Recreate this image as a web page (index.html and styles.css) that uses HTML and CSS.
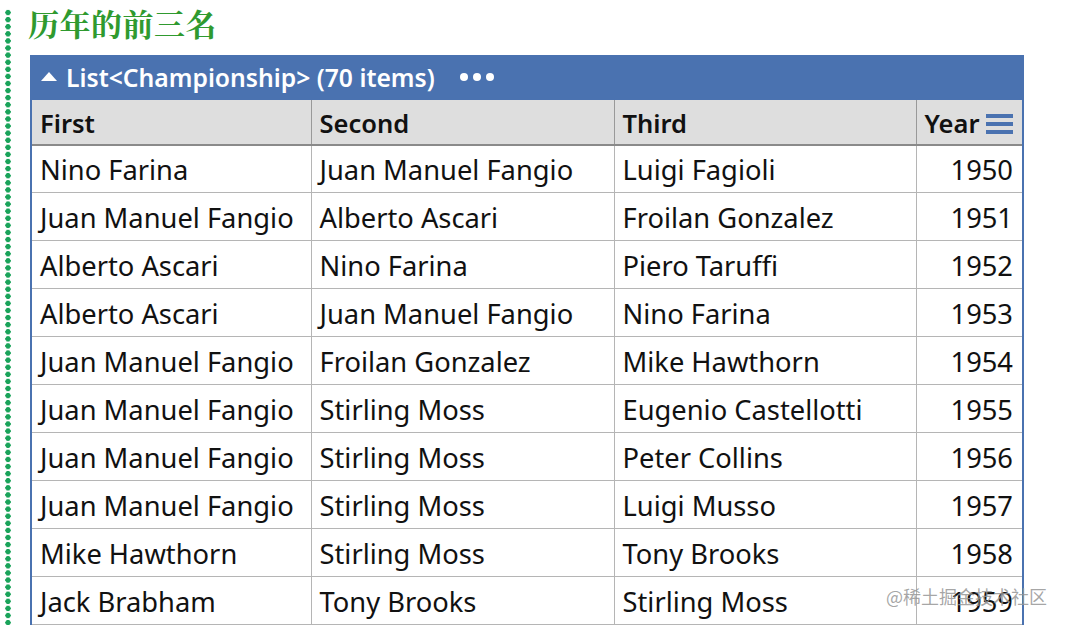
FILE: index.html
```html
<!DOCTYPE html>
<html>
<head>
<meta charset="utf-8">
<link rel="stylesheet" href="styles.css">
</head>
<body>
<div class="page">
  <div class="rail"></div>
  <div class="content">
    <h1 class="title">历年的前三名</h1>
    <div class="grid">
      <div class="bar">
        <span class="tri"></span>
        <span class="bar-text">List&lt;Championship&gt; (70 items)</span>
        <span class="dots"><i></i><i></i><i></i></span>
      </div>
      <table class="tbl">
        <colgroup>
          <col class="c1"><col class="c2"><col class="c3"><col class="c4">
        </colgroup>
        <thead>
          <tr><th>First</th><th>Second</th><th>Third</th><th class="yr">Year <span class="menu"><i></i><i></i><i></i></span></th></tr>
        </thead>
        <tbody>
          <tr><td>Nino Farina</td><td>Juan Manuel Fangio</td><td>Luigi Fagioli</td><td class="num">1950</td></tr>
          <tr><td>Juan Manuel Fangio</td><td>Alberto Ascari</td><td>Froilan Gonzalez</td><td class="num">1951</td></tr>
          <tr><td>Alberto Ascari</td><td>Nino Farina</td><td>Piero Taruffi</td><td class="num">1952</td></tr>
          <tr><td>Alberto Ascari</td><td>Juan Manuel Fangio</td><td>Nino Farina</td><td class="num">1953</td></tr>
          <tr><td>Juan Manuel Fangio</td><td>Froilan Gonzalez</td><td>Mike Hawthorn</td><td class="num">1954</td></tr>
          <tr><td>Juan Manuel Fangio</td><td>Stirling Moss</td><td>Eugenio Castellotti</td><td class="num">1955</td></tr>
          <tr><td>Juan Manuel Fangio</td><td>Stirling Moss</td><td>Peter Collins</td><td class="num">1956</td></tr>
          <tr><td>Juan Manuel Fangio</td><td>Stirling Moss</td><td>Luigi Musso</td><td class="num">1957</td></tr>
          <tr><td>Mike Hawthorn</td><td>Stirling Moss</td><td>Tony Brooks</td><td class="num">1958</td></tr>
          <tr><td>Jack Brabham</td><td>Tony Brooks</td><td>Stirling Moss</td><td class="num">1959</td></tr>
        </tbody>
      </table>
    </div>
  </div>
  <div class="watermark">@稀土掘金技术社区</div>
</div>
</body>
</html>
```

FILE: styles.css
```css
html, body {
  margin: 0;
  padding: 0;
  background: #ffffff;
  overflow: hidden;
}
.page {
  position: relative;
  width: 1066px;
  height: 625px;
  display: flex;
  overflow: hidden;
}
.rail {
  width: 6px;
  margin-left: 5px;
  margin-top: 9px;
  height: 620px;
  background-image: radial-gradient(circle, #1aa35a 2.5px, transparent 2.9px);
  background-size: 6px 7.1px;
  background-repeat: repeat-y;
}
.content {
  margin-left: 19px;
  display: flex;
  flex-direction: column;
}
.title {
  margin: 3px 0 0 -2px;
  height: 55px;
  font-family: "Noto Serif CJK SC", "Noto Sans CJK SC", serif;
  font-weight: bold;
  font-size: 31px;
  line-height: 40px;
  color: #2f9a2f;
  letter-spacing: 0.5px;
}
.grid {
  width: 994px;
  border-left: 2px solid #4a72b0;
  border-right: 2px solid #4a72b0;
  box-sizing: border-box;
}
.bar {
  height: 45px;
  background: #4a72b0;
  color: #ffffff;
  display: flex;
  align-items: center;
  font-family: "Noto Sans", "Open Sans", sans-serif;
  font-weight: 600;
  font-size: 24.7px;
  padding-left: 9px;
  box-sizing: border-box;
}
.tri {
  width: 0;
  height: 0;
  border-left: 8px solid transparent;
  border-right: 8px solid transparent;
  border-bottom: 9px solid #ffffff;
  margin-right: 9px;
  margin-top: -2px;
}
.dots {
  display: flex;
  gap: 5px;
  margin-left: 25px;
}
.dots i {
  width: 8px;
  height: 8px;
  border-radius: 50%;
  background: #ffffff;
}
.tbl {
  border-collapse: collapse;
  table-layout: fixed;
  width: 990px;
  font-family: "Noto Sans", "Open Sans", sans-serif;
  font-size: 27.3px;
  color: #111111;
}
.c1 { width: 279px; }
.c2 { width: 303px; }
.c3 { width: 302px; }
.c4 { width: 106px; }
.tbl th {
  height: 45px;
  background: #dedede;
  text-align: left;
  font-weight: 600;
  font-size: 25.5px;
  padding: 3px 0 0 8px;
  border-left: 1px solid #999999;
  border-bottom: 2px solid #8a8a8a;
  box-sizing: border-box;
  white-space: nowrap;
}
.tbl th:first-child { border-left: none; }
.menu {
  display: inline-flex;
  flex-direction: column;
  gap: 4px;
  vertical-align: middle;
  margin-left: 0;
  margin-top: -4px;
}
.menu i {
  width: 27px;
  height: 4px;
  background: #4a72b0;
}
.tbl td {
  height: 48px;
  padding: 2px 0 0 8px;
  border-left: 1px solid #b5b5b5;
  border-bottom: 1px solid #b5b5b5;
  box-sizing: border-box;
  white-space: nowrap;
  overflow: hidden;
}
.tbl td:first-child { border-left: none; }
.tbl td.num {
  text-align: right;
  padding: 2px 9px 0 0;
}
.watermark {
  position: absolute;
  left: 886px;
  top: 583px;
  font-family: "Noto Sans CJK SC", sans-serif;
  font-size: 18px;
  color: rgba(150, 150, 150, 0.85);
  white-space: nowrap;
}
```
